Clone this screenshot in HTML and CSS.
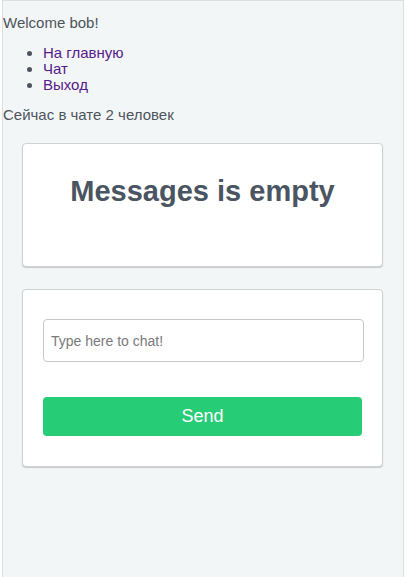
FILE: index.html
```html
<!DOCTYPE html>
<html>
<head>
<meta charset="utf-8">
<link rel="stylesheet" href="styles.css">
</head>
<body>
<div class="wrap">
  <p class="welcome">Welcome bob!</p>
  <ul class="nav">
    <li><a href="#">На главную</a></li>
    <li><a href="#">Чат</a></li>
    <li><a href="#">Выход</a></li>
  </ul>
  <p class="online">Сейчас в чате 2 человек</p>
  <div class="card messages">
    <h1 class="empty">Messages is empty</h1>
  </div>
  <div class="card form">
    <input class="chat-input" type="text" placeholder="Type here to chat!">
    <button class="send">Send</button>
  </div>
</div>
</body>
</html>
```

FILE: styles.css
```css
html, body {
  margin: 0;
  padding: 0;
  background: #ffffff;
}
body {
  font-family: "Liberation Sans", Arial, sans-serif;
  font-size: 15px;
  color: #4d545c;
}
.wrap {
  margin-left: 2px;
  width: 402px;
  min-height: 577px;
  box-sizing: border-box;
  border: 1px solid #dcdfe0;
  border-bottom: none;
  background: #f3f6f7;
  display: flow-root;
}
.welcome, .online {
  margin: 14px 0;
  line-height: 16px;
}
.nav {
  margin: 14px 0;
  padding-left: 40px;
  line-height: 16px;
}
.nav li::marker {
  color: #4d545c;
}
.nav a {
  color: #551a8b;
  text-decoration: none;
}
.card {
  margin: 20px 19px 22px 19px;
  width: 361px;
  box-sizing: border-box;
  background: #ffffff;
  border: 1px solid #cfd2d4;
  border-radius: 4px;
  box-shadow: 0 1px 1px rgba(0,0,0,0.18);
}
.messages {
  height: 124px;
  padding-top: 29px;
}
.empty {
  margin: 0;
  text-align: center;
  font-size: 29px;
  line-height: 36px;
  font-weight: bold;
  color: #4a5561;
}
.form {
  height: 178px;
  padding: 29px 20px 0 20px;
}
.chat-input {
  display: block;
  width: 321px;
  height: 43px;
  box-sizing: border-box;
  margin: 0;
  padding: 0 7px;
  border: 1px solid #c6c9cc;
  border-radius: 4px;
  font-family: "Liberation Sans", Arial, sans-serif;
  font-size: 14px;
  color: #4d545c;
  background: #ffffff;
}
.chat-input::placeholder {
  color: #7a7a7a;
}
.send {
  display: block;
  margin-top: 35px;
  width: 319px;
  height: 39px;
  border: none;
  border-radius: 4px;
  background: #27cc76;
  color: #ffffff;
  font-family: "Liberation Sans", Arial, sans-serif;
  font-size: 18px;
  padding: 0;
}
```
